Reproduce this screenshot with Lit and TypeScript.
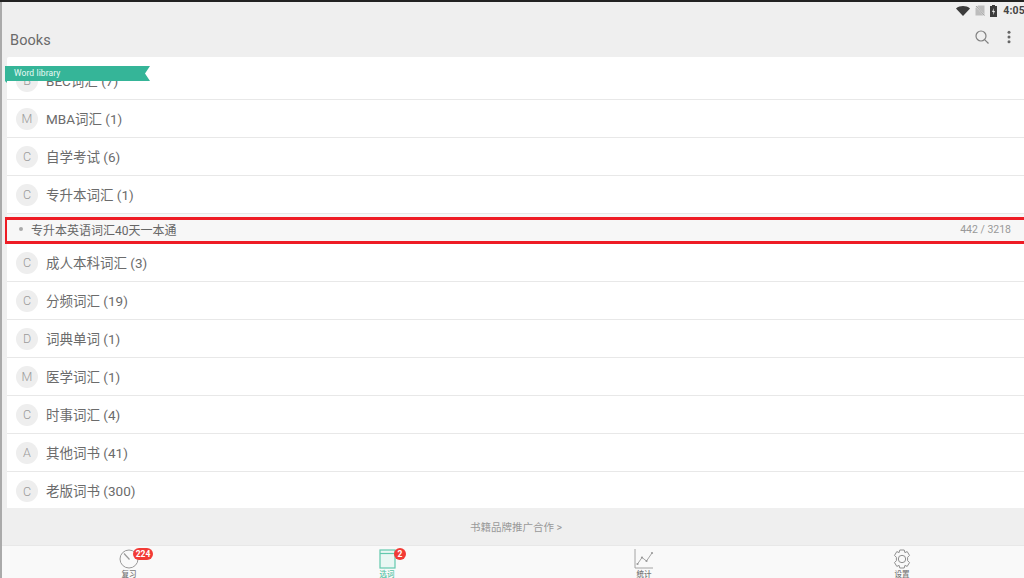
import { LitElement, html, css, svg } from "lit";
import { customElement } from "lit/decorators.js";

const rowsBefore = [
  ["M", "MBA词汇 (1)"],
  ["C", "自学考试 (6)"],
  ["C", "专升本词汇 (1)"],
];
const rowsAfter = [
  ["C", "成人本科词汇 (3)"],
  ["C", "分频词汇 (19)"],
  ["D", "词典单词 (1)"],
  ["M", "医学词汇 (1)"],
  ["C", "时事词汇 (4)"],
  ["A", "其他词书 (41)"],
  ["C", "老版词书 (300)"],
];

@customElement("app-root")
export class AppRoot extends LitElement {
  static styles = css`
    :host {
      display: flex;
      flex-direction: column;
      position: relative;
      width: 1024px;
      height: 578px;
      overflow: hidden;
      background: #efefef;
      font-family: Roboto, "Noto Sans CJK SC", sans-serif;
      color: #666;
    }
    .black { height: 2px; background: #222; flex: none; }
    .status {
      height: 17px; flex: none; display: flex; align-items: center; justify-content: flex-end;
      gap: 5px; margin-right: -1px; font-size: 10.5px; font-weight: 700; color: #444;
    }
    .status svg { display: block; }
    .status .time { margin-left: 1px; letter-spacing: 0.2px; }
    .toolbar { height: 38px; flex: none; display: flex; align-items: center; padding: 0 10px; }
    .title { font-size: 14.5px; color: #6a6a6a; flex: 1; padding-top: 5px; letter-spacing: 0.1px; }
    .toolbar svg { display: block; }
    .toolbar .search { margin-right: 18px; margin-top: -3px; }
    .toolbar .more { margin-right: 3px; margin-top: -3px; }
    .list { height: 451px; flex: none; margin-left: 7px; background: #fff; overflow: hidden; border-radius: 2px 0 0 0; }
    .row {
      height: 38px; box-sizing: border-box; border-bottom: 1px solid #e8e8e8; display: flex; align-items: center;
      padding: 0 0 0 9px; gap: 8px; font-size: 13.5px; color: #6b6b6b;
    }
    .row .text { margin-bottom: 2px; }
    .row.last { border-bottom: none; }
    .row.first { height: 43px; padding-top: 5px; }
    .circle {
      width: 22px; height: 22px; border-radius: 50%; background: #eeeeee; flex: none;
      display: flex; align-items: center; justify-content: center;
      font-size: 12.5px; font-weight: 300; color: #9a9a9a;
    }
    .sub {
      height: 30px; display: flex; align-items: center; background: #f7f7f7;
      padding: 0 13px 0 12px; font-size: 12px; color: #666; box-sizing: border-box;
    }
    .dot { width: 4px; height: 4px; border-radius: 50%; background: #aaa; margin-right: 8px; flex: none; }
    .sub .name { flex: none; }
    .sub .count { margin-left: auto; font-size: 10.5px; color: #999; padding-top: 1px; }
    .promo {
      height: 37px; flex: none; display: flex; align-items: center; justify-content: center;
      font-size: 10.5px; color: #999; padding-left: 8px;
    }
    .tabs {
      height: 33px; flex: none; display: grid; grid-template-columns: 258px 258px 256px 260px;
      background: #f9f9f9; border-top: 1px solid #e8e8e8; box-sizing: border-box;
    }
    .tab { display: flex; flex-direction: column; align-items: center; position: relative; padding-top: 3px; font-size: 7.5px; color: #777; }
    .tab svg { display: block; }
    .tab span.label { margin-top: 1px; line-height: 9px; font-weight: 500; }
    .tab.on { color: #55c4a6; }
    .badge {
      position: absolute; top: 2px; height: 12px; min-width: 12px; box-sizing: border-box; border-radius: 6px;
      background: #f23b36; color: #fff; font-size: 8.5px; font-weight: 700; line-height: 12px; text-align: center;
    }
    .b1 { left: 133px; width: 20px; }
    .b2 { left: 136px; }
    .ribbon { position: absolute; left: 5px; top: 66px; display: block; }
    .ribbon-text {
      position: absolute; left: 14px; top: 66px; height: 15px; line-height: 15px;
      font-size: 8.5px; color: #eafaf5; letter-spacing: 0.1px;
    }
    .mark {
      position: absolute; left: 5px; top: 217px; width: 1040px; height: 27px; box-sizing: border-box;
      border: solid #ee1c25; border-width: 3px 2px; pointer-events: none;
    }
    .frame { position: absolute; left: 0; top: 2px; bottom: 0; width: 2px; background: #aaaaaa; }
  `;

  private wifi() {
    return svg`<svg width="14" height="10" viewBox="0 0 14 10"><path d="M0 2.4C4-.8 10-.8 14 2.4L7 10Z" fill="#3c3c3c"/></svg>`;
  }
  private sim() {
    return svg`<svg width="10" height="11" viewBox="0 0 10 11"><path d="M3 .5h6.5v10H.5V3Z" fill="#bdbdbd"/><path d="M0 0 10 11" stroke="#eee" stroke-width="1.4"/><path d="M1 1 9.5 10.5" stroke="#8a8a8a" stroke-width=".8"/></svg>`;
  }
  private battery() {
    return svg`<svg width="7" height="12" viewBox="0 0 7 12"><path d="M2 0h3v1h2v11H0V1h2Z" fill="#3c3c3c"/><path d="M4 3 2 7h1.4L3 10l2-4H3.6Z" fill="#eee"/></svg>`;
  }

  private row(r: string[], cls = "") {
    return html`<div class="row ${cls}"><span class="circle">${r[0]}</span><span class="text">${r[1]}</span></div>`;
  }

  render() {
    return html`
      <div class="black"></div>
      <div class="status">
        ${this.wifi()}${this.sim()}${this.battery()}<span class="time">4:05</span>
      </div>
      <div class="toolbar">
        <span class="title">Books</span>
        <svg class="search" width="14" height="14" viewBox="0 0 14 14" fill="none" stroke="#808080" stroke-width="1.2">
          <circle cx="6" cy="6" r="5"/><path d="M9.600 9.600 13.500 13.500"/>
        </svg>
        <svg class="more" width="4" height="14" viewBox="0 0 4 14" fill="#666">
          <circle cx="2" cy="2.200" r="1.500"/><circle cx="2" cy="7" r="1.500"/><circle cx="2" cy="11.800" r="1.500"/>
        </svg>
      </div>
      <div class="list">
        ${this.row(["B", "BEC词汇 (7)"], "first")}
        ${rowsBefore.map((r) => this.row(r))}
        <div class="sub">
          <span class="dot"></span><span class="name">专升本英语词汇40天一本通</span>
          <span class="count">442 / 3218</span>
        </div>
        ${rowsAfter.map((r, i) => this.row(r, i === rowsAfter.length - 1 ? "last" : ""))}
      </div>
      <div class="promo">书籍品牌推广合作 &gt;</div>
      <div class="tabs">
        <div class="tab">
          <svg width="20" height="20" viewBox="0 0 20 20" fill="none" stroke="#999" stroke-width="1">
            <circle cx="10" cy="10" r="9"/><path d="M5 4.500 10.500 10.500" stroke-width="1.200"/>
          </svg>
          <span class="label">复习</span>
          <span class="badge b1">224</span>
        </div>
        <div class="tab on">
          <svg width="17" height="20" viewBox="0 0 17 20" fill="#e9f7f3" stroke="#62c9ad" stroke-width="1.200">
            <rect x="1" y="1" width="15" height="18"/><path d="M1 4.500H16"/>
          </svg>
          <span class="label">选词</span>
          <span class="badge b2">2</span>
        </div>
        <div class="tab">
          <svg width="20" height="20" viewBox="0 0 20 20" fill="none" stroke="#9a9a9a" stroke-width=".9">
            <path d="M1 0V19H19"/><path d="M3.500 15 8 8.500 12.500 12 18 4"/>
            <g fill="#9a9a9a" stroke="none"><circle cx="3.500" cy="15" r="1.100"/><circle cx="8" cy="8.500" r="1.100"/><circle cx="12.500" cy="12" r="1.100"/><circle cx="18" cy="4" r="1.100"/></g>
          </svg>
          <span class="label">统计</span>
        </div>
        <div class="tab">
          <svg width="20" height="20" viewBox="0 0 20 20" fill="none" stroke="#8f8f8f" stroke-width="1">
            <path d="M7.800 1h4.400l.7 2.600 2.300-1 2.300 3.800-1.900 1.900v3.400l1.900 1.900-2.300 3.800-2.300-1-.7 2.600H7.800l-.7-2.600-2.300 1-2.300-3.800 1.900-1.900V8.300L2.500 6.400l2.300-3.800 2.300 1Z"/>
            <circle cx="10" cy="10" r="3.700"/>
          </svg>
          <span class="label">设置</span>
        </div>
      </div>
      <svg class="ribbon" width="146" height="17" viewBox="0 0 146 17">
        <path d="M0 0H145L140 7.500 145 15H2V17L0 15Z" fill="#35b598"/>
      </svg>
      <span class="ribbon-text">Word library</span>
      <div class="mark"></div>
      <div class="frame"></div>
    `;
  }
}
